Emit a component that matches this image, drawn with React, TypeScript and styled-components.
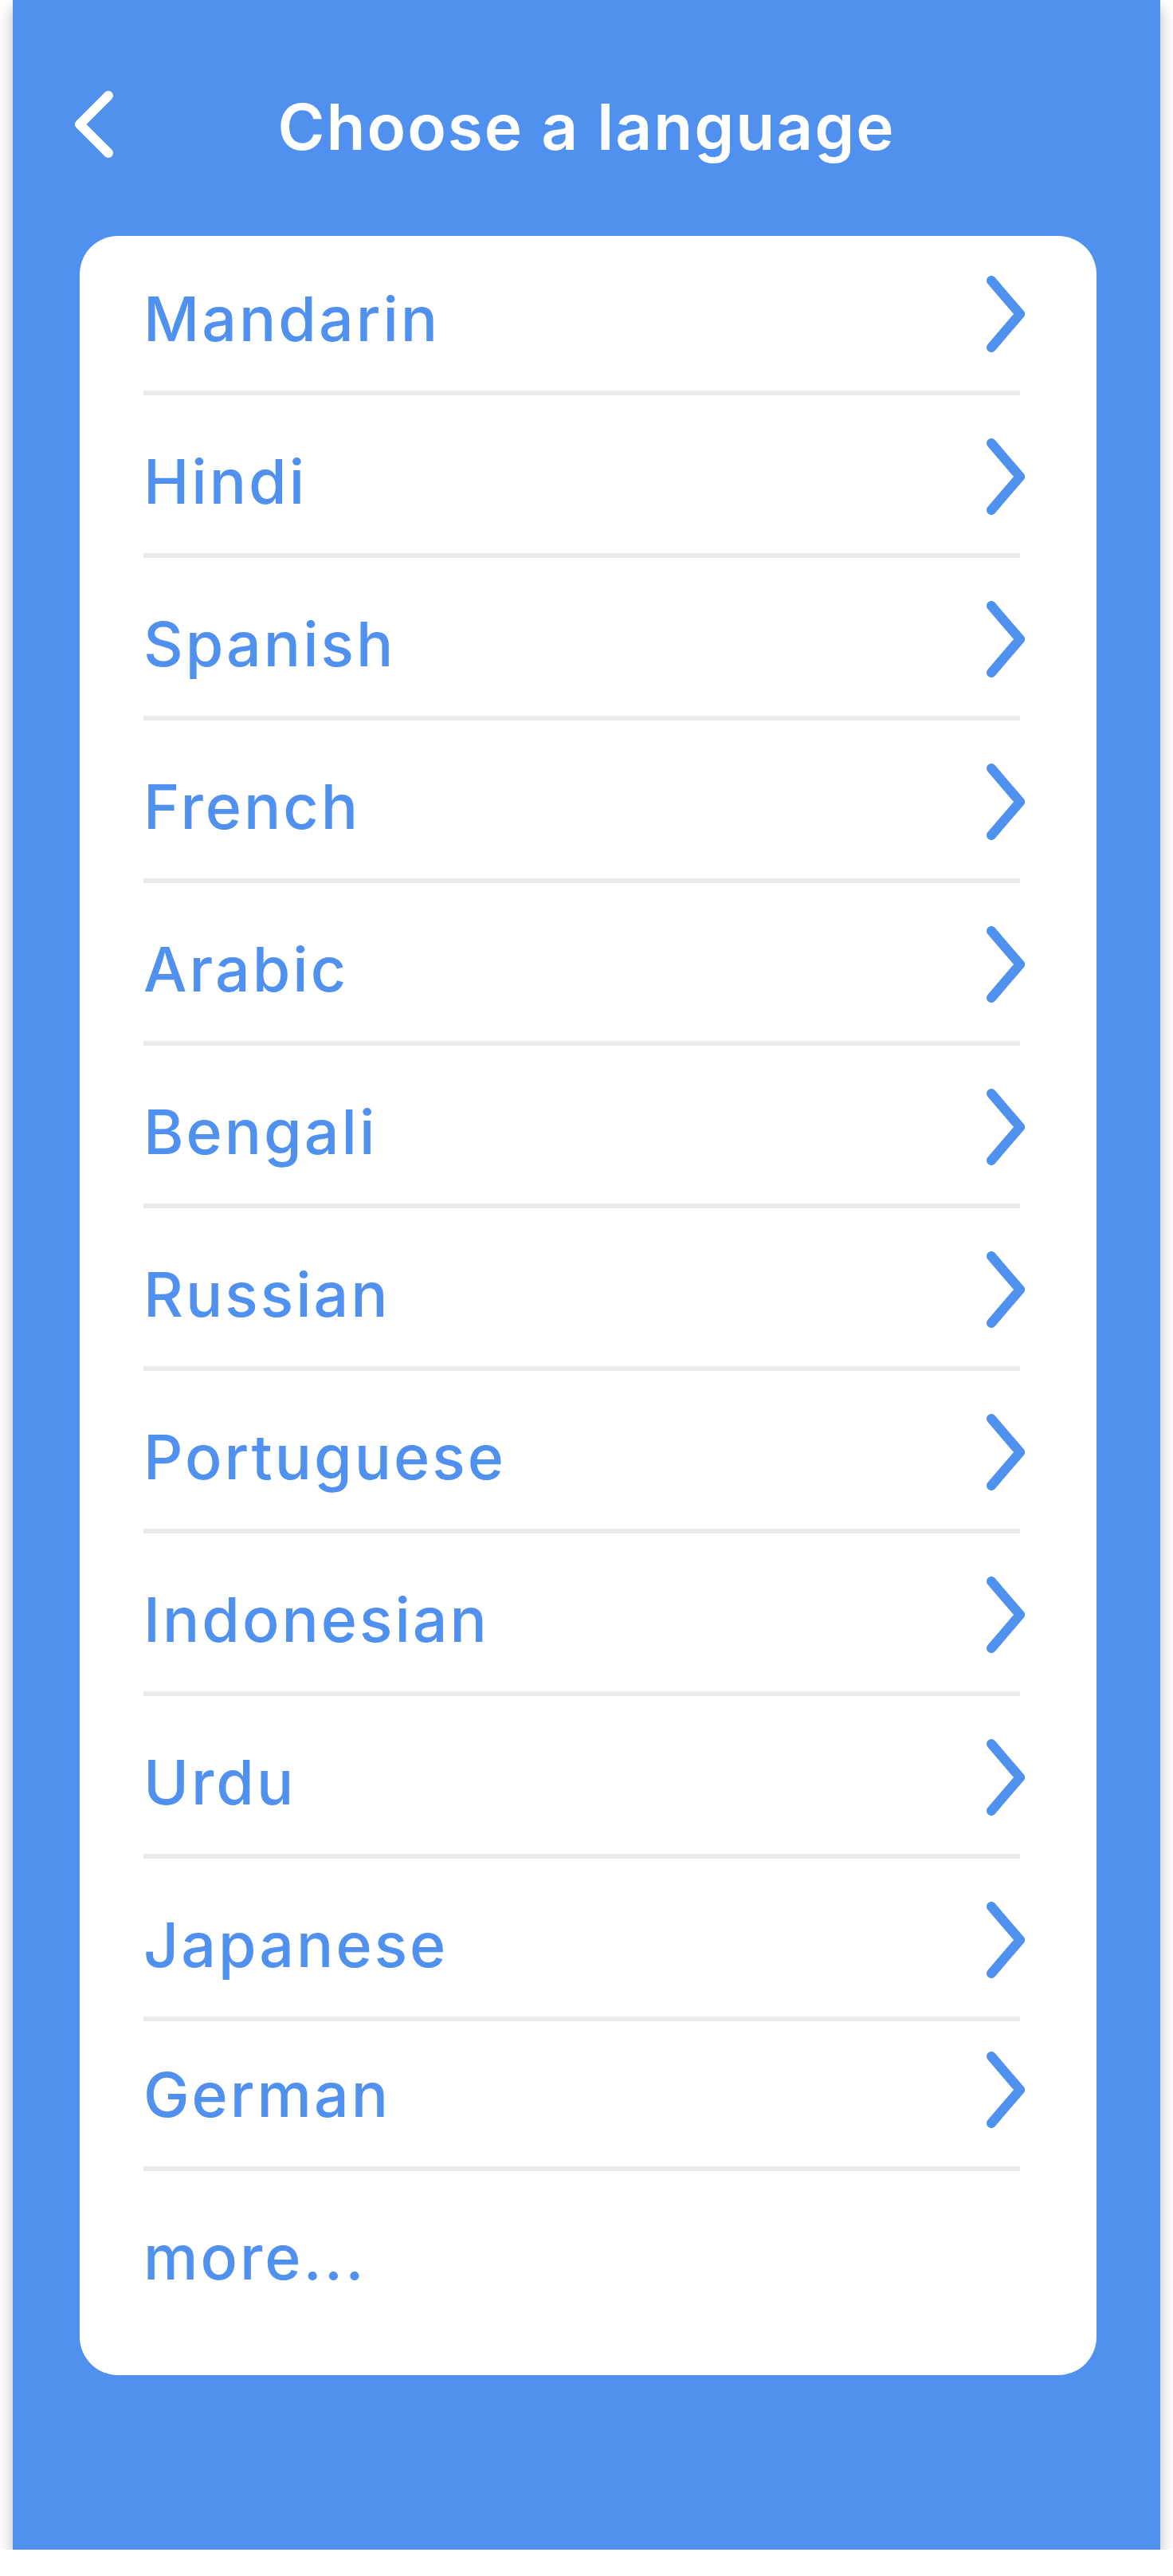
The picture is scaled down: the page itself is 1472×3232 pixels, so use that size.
import React from 'react';
import styled, { createGlobalStyle } from 'styled-components';

const GlobalStyle = createGlobalStyle`
    html, body {
        margin: 0;
        padding: 0;
        background: #ffffff;
    }
    body {
        font-family: Inter, "Noto Sans", sans-serif;
    }
`;

const BLUE = '#5090EF';

const Screen = styled.div`
    box-sizing: border-box;
    width: 1440px;
    margin-left: 16px;
    padding-bottom: 219px;
    background-color: ${BLUE};
    box-shadow: 0 10px 18px rgba(0, 0, 0, 0.28);
`;

const Header = styled.header`
    display: grid;
    grid-template-columns: 1fr auto 1fr;
    align-items: center;
    padding: 119px 0 97px;
`;

const BackButton = styled.button`
    justify-self: start;
    display: flex;
    margin: -6px 0 0 78px;
    padding: 0;
    border: none;
    background: none;
    cursor: pointer;
`;

const Title = styled.h1`
    margin: 0;
    font-family: Inter, sans-serif;
    font-size: 80px;
    line-height: 80px;
    font-weight: 600;
    letter-spacing: 2px;
    color: #ffffff;
    white-space: nowrap;
`;

const Card = styled.div`
    margin: 0 80px 0 84px;
    padding: 0 96px 0 80px;
    background: #ffffff;
    border-radius: 48px;
`;

const Row = styled.div<{ $top: number; $last?: boolean }>`
    display: flex;
    align-items: center;
    justify-content: space-between;
    height: 80px;
    padding-top: ${p => p.$top}px;
    padding-bottom: ${p => (p.$last ? 108 : 50)}px;
    border-bottom: ${p => (p.$last ? 'none' : '6px solid #EAEBED')};
    cursor: pointer;
`;

const Label = styled.span`
    font-family: Inter, sans-serif;
    font-size: 77px;
    line-height: 80px;
    font-weight: 500;
    letter-spacing: 3px;
    color: ${BLUE};
`;

const Chevron = styled.svg`
    flex: none;
    margin: -14px -6px -2px 0;
`;

const languages = [
    'Mandarin',
    'Hindi',
    'Spanish',
    'French',
    'Arabic',
    'Bengali',
    'Russian',
    'Portuguese',
    'Indonesian',
    'Urdu',
    'Japanese',
    'German',
];

// first and last rows sit a little tighter to the top
const topFor = (i: number) => {
    if (i === 0) return 64;
    if (i === languages.length - 1) return 52;
    return 68;
};

const App = () => {
    return (
        <>
            <GlobalStyle />
            <Screen>
                <Header>
                    <BackButton aria-label="Back">
                        <svg width="48" height="84" viewBox="0 0 48 84">
                            <path d="M42 6 L6 42 L42 78" fill="none" stroke="#ffffff" strokeWidth="12"
                                strokeLinecap="round" strokeLinejoin="round" />
                        </svg>
                    </BackButton>
                    <Title>Choose a language</Title>
                    <div />
                </Header>

                <Card>
                    {languages.map((lang, i) => (
                        <Row key={lang} $top={topFor(i)}>
                            <Label>{lang}</Label>
                            <Chevron width="48" height="96" viewBox="0 0 48 96">
                                <path d="M6 6 L42 48 L6 90" fill="none" stroke={BLUE} strokeWidth="12"
                                    strokeLinecap="round" strokeLinejoin="round" />
                            </Chevron>
                        </Row>
                    ))}
                    <Row $top={68} $last>
                        <Label>more...</Label>
                    </Row>
                </Card>
            </Screen>
        </>
    );
};

export default App;
